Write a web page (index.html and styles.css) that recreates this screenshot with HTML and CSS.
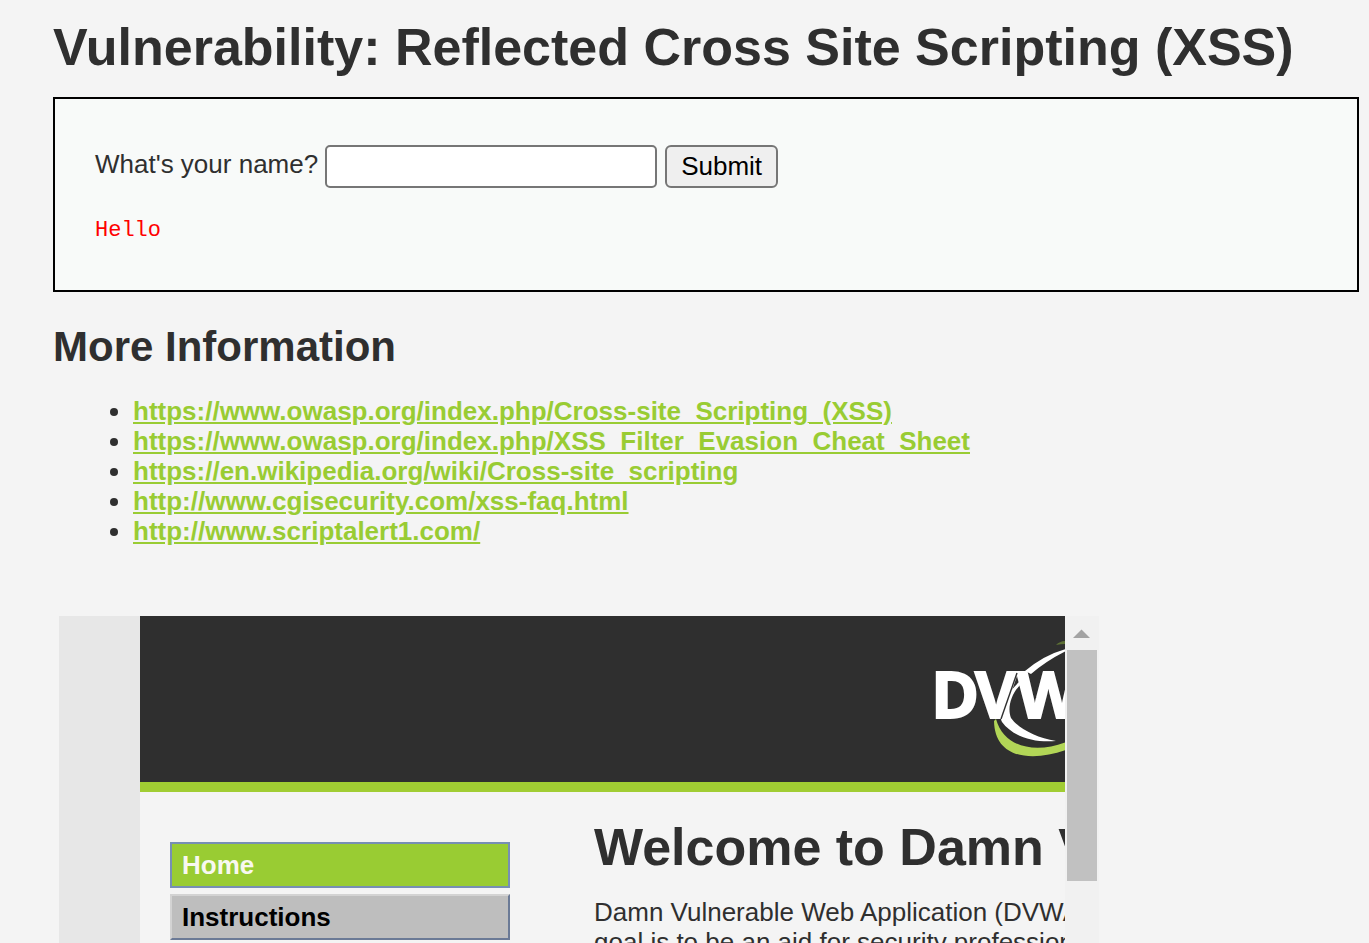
FILE: index.html
```html
<!DOCTYPE html>
<html lang="en">
<head>
<meta charset="utf-8">
<title>Vulnerability: Reflected Cross Site Scripting (XSS)</title>
<link rel="stylesheet" href="styles.css">
</head>
<body class="page">
<h1 class="title">Vulnerability: Reflected Cross Site Scripting (XSS)</h1>
<div class="vulnerable">
  <form class="name-form">
    <label for="name">What's your name?</label>
    <input class="name-input" id="name" name="name" type="text">
    <button class="submit" type="submit">Submit</button>
  </form>
  <pre class="greeting">Hello</pre>
</div>
<h2 class="subtitle">More Information</h2>
<ul class="links">
  <li><a href="https://www.owasp.org/index.php/Cross-site_Scripting_(XSS)">https://www.owasp.org/index.php/Cross-site_Scripting_(XSS)</a></li>
  <li><a href="https://www.owasp.org/index.php/XSS_Filter_Evasion_Cheat_Sheet">https://www.owasp.org/index.php/XSS_Filter_Evasion_Cheat_Sheet</a></li>
  <li><a href="https://en.wikipedia.org/wiki/Cross-site_scripting">https://en.wikipedia.org/wiki/Cross-site_scripting</a></li>
  <li><a href="http://www.cgisecurity.com/xss-faq.html">http://www.cgisecurity.com/xss-faq.html</a></li>
  <li><a href="http://www.scriptalert1.com/">http://www.scriptalert1.com/</a></li>
</ul>
<section class="frame">
  <div class="frame-view">
    <header class="banner">
      <svg class="logo" width="135" height="120" viewBox="930 640 135 120" role="img" aria-label="DVWA">
        <path d="M1056 645Q1060 641 1066 641V644Q1061 644 1056 645Z" fill="#5d7035"/>
        <path d="M1025 671Q1044 655 1066 649V651Q1046 661 1031 674Z" fill="#fff"/>
        <path d="M1019 682C1001 700 998 714 1002 722C1013 737 1035 743 1056 741C1036 738 1018 728 1011 718C1007 708 1011 694 1021 684Z" fill="#fff"/>
        <path d="M996 719C1004 748 1036 754 1066 742V750C1035 761 995 761 994 721Z" fill="#b2d657"/>
        <text class="logo-text" y="718"><tspan x="931">D</tspan><tspan x="975">V</tspan><tspan x="1017">W</tspan></text>
        <path d="M1017 673L1001 719" stroke="#2f2f2f" stroke-width="1.4"/>
      </svg>
    </header>
    <div class="frame-body">
      <nav class="menu">
        <a class="menu-item selected" href="#home">Home</a>
        <a class="menu-item" href="#instructions">Instructions</a>
      </nav>
      <div class="welcome">
        <h1 class="welcome-title">Welcome to Damn Vulnerable Web Application!</h1>
        <p class="welcome-text">Damn Vulnerable Web Application (DVWA) is a PHP/MySQL web application that is damn vulnerable. Its main<br>goal is to be an aid for security professionals to test their skills and tools in a legal environment.</p>
      </div>
    </div>
  </div>
  <div class="scrollbar">
    <svg class="scroll-up" width="34" height="34" viewBox="0 0 34 34" aria-hidden="true"><path d="M8 22L16.5 13.5L25 22Z" fill="#a3a3a3"/></svg>
    <div class="thumb"></div>
  </div>
</section>
</body>
</html>
```
FILE: styles.css
```css
* { box-sizing: border-box; }

.page {
  display: flex;
  flex-direction: column;
  height: 100vh;
  margin: 0;
  padding: 17px 10px 0 53px;
  overflow: hidden;
  background: #f4f4f4;
  color: #2f2f2f;
  font: 26px/30px "Liberation Sans", Arial, sans-serif;
}

.title,
.welcome-title {
  margin: 0;
  font-size: 52px;
  line-height: 60px;
  white-space: nowrap;
}

.vulnerable {
  margin-top: 20px;
  padding: 46px 40px;
  border: 2px solid #000;
  background: #f8faf9;
}

.name-form {
  display: flex;
  align-items: center;
  gap: 8px;
}

.name-form label {
  margin-right: -1px;
  padding-bottom: 5px;
}

.name-input {
  width: 332px;
  height: 43px;
  border: 2px solid #767676;
  border-radius: 5px;
  background: #fff;
  font: inherit;
}

.submit {
  height: 43px;
  padding: 0 14px 2px;
  border: 2px solid #767676;
  border-radius: 6px;
  background: #efefef;
  color: #000;
  font: inherit;
}

.greeting {
  margin: 28px 0 -2px;
  color: #f00;
  font: 22px/30px "Liberation Mono", monospace;
}

.subtitle {
  margin: 31px 0 0;
  font-size: 42px;
  line-height: 48px;
}

.links {
  margin: 25px 0 0;
  padding-left: 80px;
}

.links a {
  color: #9c3;
  font-weight: bold;
}

.frame {
  display: flex;
  flex: 1;
  min-height: 0;
  width: 1040px;
  max-width: 100%;
  margin: 70px 0 0 6px;
}

.frame-view {
  flex: 1;
  min-width: 0;
  padding-left: 81px;
  overflow: hidden;
  background: #e7e7e7;
}

.banner {
  display: flex;
  justify-content: flex-end;
  height: 176px;
  padding-top: 24px;
  border-bottom: 10px solid #a1cd33;
  background: #2f2f2f;
}

.logo-text {
  fill: #fff;
  stroke: #fff;
  stroke-width: 2px;
  font: bold 65px "Open Sans", sans-serif;
}

.frame-body {
  display: flex;
  gap: 84px;
  height: 100%;
  padding: 25px 0 0 30px;
  background: #f4f4f4;
}

.menu {
  display: flex;
  flex: none;
  flex-direction: column;
  gap: 6px;
  width: 340px;
  padding-top: 25px;
}

.menu-item {
  padding: 6px 10px;
  border: 2px solid;
  border-color: #d3d3d3 #6b7a96 #6b7a96 #d3d3d3;
  background: #bebebe;
  color: #000;
  font-weight: bold;
  text-decoration: none;
}

.menu-item.selected {
  border-color: #778fb4;
  background: #9c3;
  color: #f8f8f0;
}

.welcome { flex: 1; min-width: 0; }

.welcome-text {
  margin: 20px 0 0;
  white-space: nowrap;
}

.scrollbar {
  flex: none;
  width: 34px;
  padding: 0 2px;
  background: #f1f1f1;
}

.scroll-up {
  display: block;
  margin-left: -2px;
}

.thumb {
  height: 231px;
  background: #c1c1c1;
}
```
